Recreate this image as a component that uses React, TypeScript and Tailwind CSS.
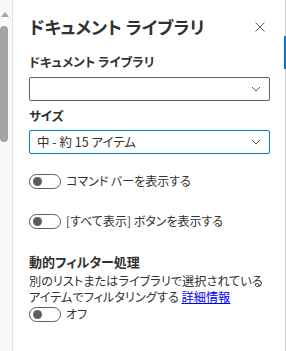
import React from "react";

const font = "[font-family:'Noto_Sans_CJK_JP','Noto_Sans',sans-serif] [font-feature-settings:'palt']";

function Toggle() {
  return (
    <span className="flex h-[15px] w-[32px] shrink-0 items-center rounded-full border border-[#605e5c] px-[3px]">
      <span className="h-[9px] w-[9px] rounded-full bg-[#605e5c]" />
    </span>
  );
}

function Chevron() {
  return (
    <svg width="10" height="6" viewBox="0 0 10 6" className="shrink-0">
      <path d="M1 1l4 4 4-4" fill="none" stroke="#605e5c" strokeWidth="1" />
    </svg>
  );
}

export default function App() {
  return (
    <div className={`flex h-[351px] w-[286px] overflow-hidden bg-white text-[#323130] ${font}`}>
      {/* page scrollbar */}
      <div className="relative w-[12px] shrink-0 bg-[#f8f8f8]">
        <div className="absolute left-[1px] top-[12px] h-0 w-0 border-x-[4px] border-b-[5px] border-x-transparent border-b-[#a3a3a3]" />
        <div className="absolute left-0 top-[26px] h-[116px] w-[8px] rounded-full bg-[#a3a3a3]" />
      </div>
      <div className="w-px shrink-0 bg-[#e1e1e1]" />

      {/* panel */}
      <div className="flex flex-1 flex-col pl-[16px] pr-[15px]">
        <div className="flex items-center justify-between pt-[16px]">
          <h1 className="text-[17.5px] font-bold leading-[22px]">ドキュメント ライブラリ</h1>
          <svg width="10" height="10" viewBox="0 0 10 10" className="mr-[5px]">
            <path d="M0.5 0.5l9 9M9.5 0.5l-9 9" stroke="#605e5c" strokeWidth="1" />
          </svg>
        </div>

        <div className="mt-[15px] text-[12.5px] font-semibold leading-[18px]">ドキュメント ライブラリ</div>
        <div className="mt-[6px] flex h-[24px] items-center justify-end rounded-[2px] border border-[#605e5c] px-[8px]">
          <Chevron />
        </div>

        <div className="mt-[6px] text-[12.5px] font-semibold leading-[18px]">サイズ</div>
        <div className="mt-[5px] flex h-[24px] items-center justify-between rounded-[2px] border border-[#0078d4] pl-[7px] pr-[8px]">
          <span className="text-[12.5px]">中 - 約 15 アイテム</span>
          <Chevron />
        </div>

        <div className="mt-[18px] flex h-[18px] items-center gap-[5px]">
          <Toggle />
          <span className="text-[12px] leading-[18px]">コマンド バーを表示する</span>
        </div>

        <div className="mt-[22px] flex h-[18px] items-center gap-[5px]">
          <Toggle />
          <span className="text-[12px] leading-[18px]">[すべて表示] ボタンを表示する</span>
        </div>

        <div className="mt-[23px] text-[13px] font-bold leading-[18px]">動的フィルター処理</div>
        <p className="mt-[2px] whitespace-nowrap text-[12.2px] leading-[16px]">
          別のリストまたはライブラリで選択されている
          <br />
          アイテムでフィルタリングする{" "}
          <a className="text-[#0000ee] underline">詳細情報</a>
        </p>
        <div className="mt-[1px] flex h-[16px] items-center gap-[5px]">
          <Toggle />
          <span className="text-[12px] leading-[16px]">オフ</span>
        </div>
      </div>

      {/* right edge */}
      <div className="relative w-px shrink-0 bg-[#c8c8c8]">
        <div className="absolute left-[-1px] top-[36px] h-[33px] w-[2px] bg-[#0078d4]" />
      </div>
    </div>
  );
}
